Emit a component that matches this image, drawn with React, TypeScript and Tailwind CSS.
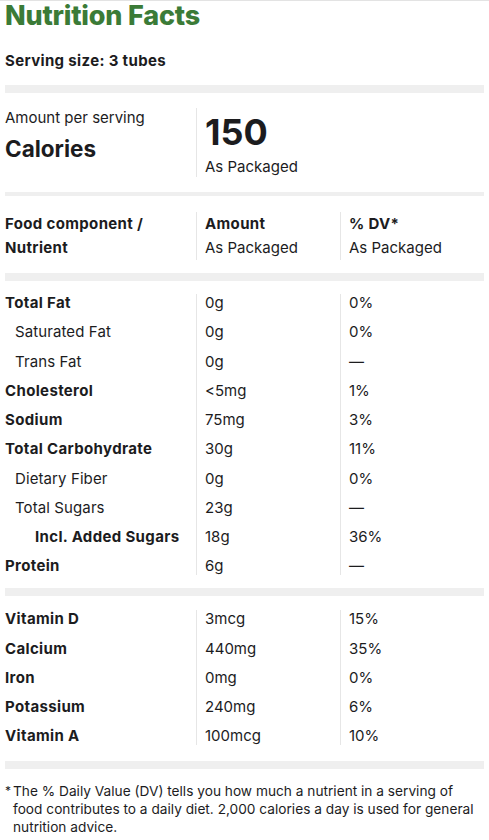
import React from "react"

type Row = {
  name: string
  amount: string
  dv: string
  bold?: boolean
  indent?: 0 | 1 | 2
}

const nutrients: Row[] = [
  { name: "Total Fat", amount: "0g", dv: "0%", bold: true },
  { name: "Saturated Fat", amount: "0g", dv: "0%", indent: 1 },
  { name: "Trans Fat", amount: "0g", dv: "—", indent: 1 },
  { name: "Cholesterol", amount: "<5mg", dv: "1%", bold: true },
  { name: "Sodium", amount: "75mg", dv: "3%", bold: true },
  { name: "Total Carbohydrate", amount: "30g", dv: "11%", bold: true },
  { name: "Dietary Fiber", amount: "0g", dv: "0%", indent: 1 },
  { name: "Total Sugars", amount: "23g", dv: "—", indent: 1 },
  { name: "Incl. Added Sugars", amount: "18g", dv: "36%", bold: true, indent: 2 },
  { name: "Protein", amount: "6g", dv: "—", bold: true },
]

const vitamins: Row[] = [
  { name: "Vitamin D", amount: "3mcg", dv: "15%", bold: true },
  { name: "Calcium", amount: "440mg", dv: "35%", bold: true },
  { name: "Iron", amount: "0mg", dv: "0%", bold: true },
  { name: "Potassium", amount: "240mg", dv: "6%", bold: true },
  { name: "Vitamin A", amount: "100mcg", dv: "10%", bold: true },
]

const indentClass = ["pl-0", "pl-[10px]", "pl-[30px]"]

function Bar({ thin }: { thin?: boolean }) {
  return <div className={thin ? "h-[4px] bg-[#efefef]" : "h-[8px] bg-[#efefef]"} />
}

// three columns, each a stacked list, so the dividers run unbroken
function NutrientTable({ rows }: { rows: Row[] }) {
  return (
    <div className="grid grid-cols-[191px_144px_1fr] text-[15px] leading-[18px]">
      <div className="flex flex-col gap-[11.25px]">
        {rows.map((r) => (
          <div
            key={r.name}
            className={`${indentClass[r.indent ?? 0]} ${r.bold ? "font-bold tracking-[0.35px]" : "tracking-[0.1px]"}`}
          >
            {r.name}
          </div>
        ))}
      </div>
      <div className="flex flex-col gap-[11.25px] border-l border-[#e6e6e6] pl-[8px]">
        {rows.map((r) => (
          <div key={r.name}>{r.amount}</div>
        ))}
      </div>
      <div className="flex flex-col gap-[11.25px] border-l border-[#e6e6e6] pl-[8px]">
        {rows.map((r) => (
          <div key={r.name}>{r.dv}</div>
        ))}
      </div>
    </div>
  )
}

export default function App() {
  return (
    <div
      className="min-h-screen bg-white border-t border-[#e3e3e3] px-[5px] pb-4 text-[#1c1c1e]"
      style={{ fontFamily: "Inter, 'Noto Sans', 'Liberation Sans', sans-serif" }}
    >
      {/* 标题 */}
      <h1 className="text-[27px] leading-[30px] font-extrabold tracking-[-0.2px] text-[#3b7b37]">
        Nutrition Facts
      </h1>
      <div className="mt-[18px] text-[15px] leading-[24px] font-bold tracking-[0.35px]">Serving size: 3 tubes</div>

      <div className="mt-[12px]">
        <Bar />
      </div>

      {/* 热量 */}
      <div className="mt-[15px] grid grid-cols-[191px_1fr]">
        <div className="flex flex-col">
          <div className="text-[15px] leading-[20px]">Amount per serving</div>
          <div className="mt-[6px] text-[22.5px] leading-[30px] font-bold">Calories</div>
        </div>
        <div className="flex flex-col border-l border-[#e6e6e6] pl-[8px]">
          <div className="text-[36px] leading-[49px] font-bold">150</div>
          <div className="text-[15px] leading-[20px]">As Packaged</div>
        </div>
      </div>

      <div className="mt-[15px]">
        <Bar thin />
      </div>

      {/* 表头 */}
      <div className="mt-[16px] grid grid-cols-[191px_144px_1fr] text-[15px] leading-[24px]">
        <div className="font-bold tracking-[0.35px]">
          Food component /<br />
          Nutrient
        </div>
        <div className="border-l border-[#e6e6e6] pl-[8px]">
          <div className="font-bold tracking-[0.35px]">Amount</div>
          <div>As Packaged</div>
        </div>
        <div className="border-l border-[#e6e6e6] pl-[8px]">
          <div className="font-bold tracking-[0.35px]">% DV*</div>
          <div>As Packaged</div>
        </div>
      </div>

      <div className="mt-[13px]">
        <Bar />
      </div>

      <div className="mt-[13px]">
        <NutrientTable rows={nutrients} />
      </div>

      <div className="mt-[13px]">
        <Bar />
      </div>

      <div className="mt-[14px]">
        <NutrientTable rows={vitamins} />
      </div>

      <div className="mt-[16px]">
        <Bar />
      </div>

      {/* 脚注 */}
      <div className="mt-[13px] flex text-[13.7px] leading-[18px]">
        <span className="w-[8px] shrink-0 text-[12px]">*</span>
        <p className="whitespace-nowrap">
          The % Daily Value (DV) tells you how much a nutrient in a serving of
          <br />
          food contributes to a daily diet. 2,000 calories a day is used for general
          <br />
          nutrition advice.
        </p>
      </div>
    </div>
  )
}
